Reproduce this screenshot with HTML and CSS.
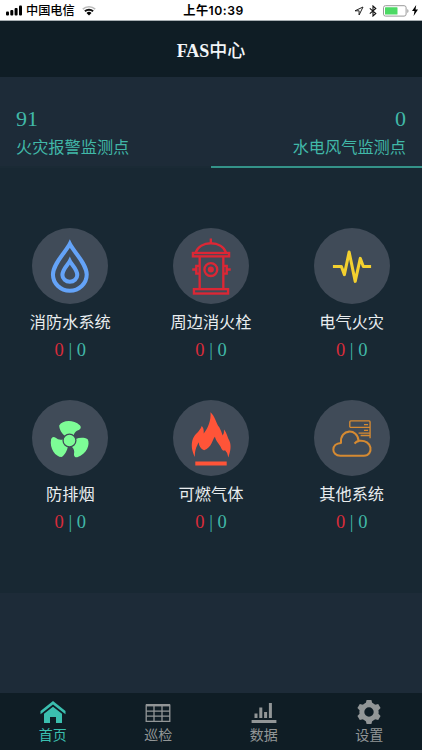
FILE: index.html
```html
<!DOCTYPE html>
<html lang="zh-CN">

<head>
  <meta charset="UTF-8">
  <meta name="viewport" content="width=device-width, initial-scale=1.0">
  <title>FAS中心</title>
  <link rel="stylesheet" href="styles.css">
</head>

<body>
  <div class="status">
    <div class="status-left">
      <svg class="signal" viewBox="0 0 17 11">
        <rect x="0" y="6.5" width="3" height="4" rx="1" />
        <rect x="4.3" y="5" width="3" height="5.5" rx="1" />
        <rect x="8.6" y="3" width="3" height="7.5" rx="1" />
        <rect x="13" y="0.5" width="3" height="10" rx="1" />
      </svg>
      <span class="carrier">中国电信</span>
      <svg class="wifi" viewBox="0 0 14 11">
        <path d="M.8 4.2a9 9 0 0 1 12.4 0" fill="none" stroke="#bbb" stroke-width="1.6" />
        <path d="M2.9 6.3a6 6 0 0 1 8.2 0" fill="none" stroke="#111" stroke-width="1.9" />
        <path d="M4.5 8a3.7 3.7 0 0 1 5 0L7 10.6z" />
      </svg>
    </div>
    <div class="time">上午10:39</div>
    <div class="status-right">
      <svg class="locate" viewBox="0 0 10 10">
        <path d="M9 1L1 4.8h4.1V9z" fill="none" stroke="#222" />
      </svg>
      <svg class="bluetooth" viewBox="0 0 8 12">
        <path d="M.8 3.3l6 5.2L4 11V1l2.8 2.5-6 5.2" fill="none" stroke="#111" stroke-width="1.1" />
      </svg>
      <svg class="battery" viewBox="0 0 26 12">
        <rect x=".5" y=".7" width="22.6" height="10.4" rx="2" fill="#fff" stroke="#999" />
        <rect x="2" y="2.2" width="12.5" height="7.4" rx=".6" fill="#4cd964" />
        <path d="M24.3 4v4q1.2-.6 1.2-2t-1.2-2" fill="#999" />
      </svg>
      <svg class="bolt" viewBox="0 0 6 11">
        <path d="M4.2 0L0 6h2.5L1.6 11 6 4.6H3.5z" />
      </svg>
    </div>
  </div>

  <header class="header">FAS<span class="header-cn">中心</span></header>

  <div class="tabs">
    <div class="tab">
      <div class="tab-num">91</div>
      <div class="tab-name">火灾报警监测点</div>
    </div>
    <div class="tab tab-right active">
      <div class="tab-num">0</div>
      <div class="tab-name">水电风气监测点</div>
    </div>
  </div>

  <main class="grid">
    <div class="item">
      <svg class="icon" viewBox="0 0 225 225" fill="none" stroke="#64a3f8" stroke-width="12">
        <path d="M112 47C102 68 62 106 62 138a50 48 0 0 0 100 0C162 106 122 68 112 47z" />
        <path d="M112 98C107 108 90 122 90 139a22 20 0 0 0 44 0C134 122 117 108 112 98z" />
      </svg>
      <div class="name">消防水系统</div>
      <div class="count"><span class="alarm">0</span> | 0</div>
    </div>
    <div class="item">
      <svg class="icon" viewBox="0 0 225 225" fill="none" stroke="#dc2735" stroke-width="7">
        <path d="M112 31v14M67 73C73 55 91 45 112 45s39 10 45 28" />
        <rect x="59" y="74" width="107" height="10" />
        <path d="M79 84v97M149 84v97" />
        <rect x="62" y="181" width="101" height="13" />
        <path d="M79 112H69v23h10M69 123H57M149 112h10v23h-10M159 123h12" />
        <circle cx="112" cy="123" r="19" />
        <circle cx="112" cy="123" r="9" fill="#dc2735" stroke="none" />
      </svg>
      <div class="name">周边消火栓</div>
      <div class="count"><span class="alarm">0</span> | 0</div>
    </div>
    <div class="item">
      <svg class="icon" viewBox="0 0 225 225" fill="none" stroke="#f3d02f" stroke-width="9" stroke-linejoin="round">
        <path d="M56 114h25l9 24 14-67 18 87 15-68 9 24h23" />
      </svg>
      <div class="name">电气火灾</div>
      <div class="count"><span class="alarm">0</span> | 0</div>
    </div>
    <div class="item">
      <svg class="icon" viewBox="0 0 225 225" fill="#7dfc96">
        <g transform="translate(5.500 6) scale(.95)">
          <path id="blade" d="M97 106C88 98 79 86 79 73C88 58 120 52 144 73Q150 82 140 87Q127 91 124 104L112 120z" />
          <use href="#blade" transform="rotate(120 111 120)" />
          <use href="#blade" transform="rotate(240 111 120)" />
          <circle cx="111" cy="120" r="20" stroke="#404b58" stroke-width="4" />
        </g>
      </svg>
      <div class="name">防排烟</div>
      <div class="count"><span class="alarm">0</span> | 0</div>
    </div>
    <div class="item">
      <svg class="icon" viewBox="0 0 225 225" fill="#ff5438">
        <path d="M65 169C55 151 53 130 59 115C64 101 80 93 85 77Q92 83 91 99C104 82 113 60 111 36C125 49 127 68 137 81Q143 92 147 105Q152 97 151 87C160 97 161 111 167 121C174 137 169 155 164 170Q163 157 154 149Q148 152 144 145C139 132 128 124 124 109C116 118 116 140 92 149Q77 142 76 125C69 139 64 150 65 169z" />
        <path d="M66 182h93v12H66z" />
      </svg>
      <div class="name">可燃气体</div>
      <div class="count"><span class="alarm">0</span> | 0</div>
    </div>
    <div class="item">
      <svg class="icon" viewBox="0 0 225 225" fill="none" stroke="#d58a32" stroke-width="6" stroke-linejoin="round">
        <path d="M78 165C50 165 50 128 80 127C76 84 130 83 132 121C175 115 177 165 148 165z" />
        <path d="M134 121q-9 1-14 8" />
        <path d="M106 81V65q0-3 3-3h54q3 0 3 3v48M106 81h60M148 73h12M132 98h34M148 90h12M138 105h28" stroke-width="4" />
      </svg>
      <div class="name">其他系统</div>
      <div class="count"><span class="alarm">0</span> | 0</div>
    </div>
  </main>

  <nav class="nav">
    <div class="nav-item current">
      <svg class="nav-icon" viewBox="0 0 26 26" fill="currentColor">
        <path d="M13 1L.5 11v3.2L13 4.6l12.5 9.6V11z" />
        <path d="M13 6.7L4 13.700V23h6v-6h6v6h6v-9.300z" />
      </svg>
      <span>首页</span>
    </div>
    <div class="nav-item">
      <svg class="nav-icon" viewBox="0 0 26 26" fill="none" stroke="currentColor">
        <path d="M1 5.200h24" stroke-width="2.400" />
        <path d="M1.200 4.500v16.800h23.600V4.500M1 11.200h24M1 16.200h24M9 5v16M17 5v16" stroke-width="1.300" />
      </svg>
      <span>巡检</span>
    </div>
    <div class="nav-item">
      <svg class="nav-icon" viewBox="0 0 26 26" fill="currentColor">
        <path d="M.6 20h24.800v3H.6zM3.500 13.500h3V18h-3zM8.300 7.500h3V18h-3zM13.100 12h3v6h-3zM17.900 3h3v15h-3z" />
      </svg>
      <span>数据</span>
    </div>
    <div class="nav-item">
      <svg class="nav-icon" viewBox="0 0 26 26">
        <circle cx="13" cy="12" r="7.200" fill="none" stroke="currentColor" stroke-width="5" />
        <g fill="currentColor">
          <path id="tooth" d="M9.500 4L10.600 0h4.800l1.100 4z" />
          <use href="#tooth" transform="rotate(60 13 12)" />
          <use href="#tooth" transform="rotate(120 13 12)" />
          <use href="#tooth" transform="rotate(180 13 12)" />
          <use href="#tooth" transform="rotate(240 13 12)" />
          <use href="#tooth" transform="rotate(300 13 12)" />
        </g>
      </svg>
      <span>设置</span>
    </div>
  </nav>
</body>

</html>
```
FILE: styles.css
```css
* {
  box-sizing: border-box;
}

body {
  margin: 0;
  height: 750px;
  display: flex;
  flex-direction: column;
  overflow: hidden;
  background: #1d2b38;
  font-family: "Liberation Serif", "Noto Sans CJK SC", serif;
}

svg {
  display: block;
}

.status {
  height: 21px;
  display: grid;
  grid-template-columns: 1fr auto 1fr;
  align-items: center;
  padding: 1px 4px 0 6px;
  background: #fff;
  border-bottom: 1px solid #a9b0b4;
  color: #000;
  font-family: Inter, "Noto Sans CJK SC", sans-serif;
  font-size: 12.2px;
  line-height: 19px;
}

.status-left,
.status-right {
  display: flex;
  align-items: center;
}

.status-right {
  justify-content: flex-end;
}

.signal {
  width: 17px;
  height: 11px;
  margin-right: 3px;
}

.carrier {
  font-weight: 500;
}

.wifi {
  width: 14px;
  height: 11px;
  margin-left: 7px;
}

.time {
  padding-left: 3px;
  font-weight: 600;
  letter-spacing: 0.5px;
}

.locate {
  width: 10px;
  height: 10px;
  margin-right: 5px;
}

.bluetooth {
  width: 8px;
  height: 12px;
  margin-right: 6px;
}

.battery {
  width: 26px;
  height: 12px;
  margin-right: 3px;
}

.bolt {
  width: 6px;
  height: 11px;
}

.header {
  height: 56px;
  line-height: 61px;
  background: #0f1d25;
  color: #f2f5f7;
  font-size: 18px;
  font-weight: bold;
  text-align: center;
}

.header-cn {
  font-weight: 500;
}

.tabs {
  display: flex;
  height: 91px;
}

.tab {
  flex: 1;
  padding: 29px 16px 0;
  color: #41b8a8;
  border-bottom: 2px solid #1a2a35;
}

.tab-right {
  text-align: right;
}

.tab.active {
  border-bottom-color: #349389;
}

.tab-num {
  font-size: 22px;
  line-height: 26px;
}

.tab-name {
  font-size: 16.2px;
  line-height: 32px;
}

.grid {
  height: 425px;
  padding-top: 60px;
  display: grid;
  grid-template-columns: repeat(3, 1fr);
  grid-auto-rows: 172px;
  background: #182833;
}

.item {
  display: flex;
  flex-direction: column;
  align-items: center;
}

.icon {
  width: 76px;
  height: 76px;
  border-radius: 50%;
  background: #404b58;
}

.name {
  margin-top: 6px;
  color: #e9edef;
  font-size: 16.2px;
  line-height: 26px;
}

.count {
  color: #41b8a8;
  font-size: 18.5px;
  line-height: 29px;
}

.alarm {
  color: #d92c3b;
}

.nav {
  height: 57px;
  margin-top: auto;
  display: flex;
  background: #0f1d25;
  color: #929697;
  font-size: 14px;
}

.nav-item {
  flex: 1;
  display: flex;
  flex-direction: column;
  align-items: center;
  padding-top: 7px;
  line-height: 20px;
}

.nav-icon {
  width: 26px;
  height: 26px;
}

.current {
  color: #3bbfaf;
}
```
